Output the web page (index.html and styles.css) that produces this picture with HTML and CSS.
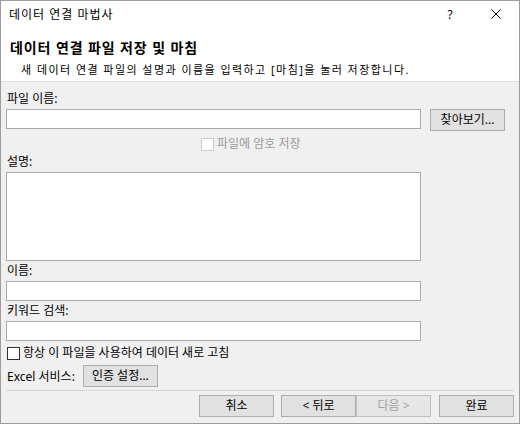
FILE: index.html
```html
<!DOCTYPE html>
<html lang="ko">

<head>
    <meta charset="UTF-8">
    <meta name="viewport" content="width=device-width, initial-scale=1">
    <title>데이터 연결 마법사</title>
    <link rel="stylesheet" href="styles.css">
</head>

<body>
    <div class="window">
        <div class="titlebar">
            <span class="title">데이터 연결 마법사</span>
            <div class="title-buttons">
                <span class="tb-btn help">?</span>
                <span class="tb-btn close">
                    <svg width="10" height="10" viewBox="0 0 10 10">
                        <path d="M0.5 0.5L9.5 9.5M9.5 0.5L0.5 9.5" stroke="#000" stroke-width="1" fill="none" />
                    </svg>
                </span>
            </div>
        </div>

        <div class="header">
            <h1 class="heading">데이터 연결 파일 저장 및 마침</h1>
            <p class="subtitle">새 데이터 연결 파일의 설명과 이름을 입력하고 [마침]을 눌러 저장합니다.</p>
        </div>

        <div class="content">
            <label class="label">파일 이름:</label>
            <div class="file-row">
                <div class="input"></div>
                <button class="btn">찾아보기...</button>
            </div>

            <div class="check-row pw-row disabled">
                <span class="checkbox"></span>
                <span>파일에 암호 저장</span>
            </div>

            <label class="label">설명:</label>
            <div class="input textarea"></div>

            <label class="label">이름:</label>
            <div class="input"></div>

            <label class="label">키워드 검색:</label>
            <div class="input"></div>

            <div class="check-row always-row">
                <span class="checkbox"></span>
                <span>항상 이 파일을 사용하여 데이터 새로 고침</span>
            </div>

            <div class="excel-row">
                <span class="excel-label">Excel 서비스:</span>
                <button class="btn">인증 설정...</button>
            </div>
        </div>

        <div class="footer">
            <button class="btn cancel">취소</button>
            <button class="btn">&lt; 뒤로</button>
            <button class="btn" disabled>다음 &gt;</button>
            <button class="btn finish">완료</button>
        </div>
    </div>
</body>

</html>
```

FILE: styles.css
```css
/* Window frame */
html,
body {
    margin: 0;
    padding: 0;
}

body {
    font-family: "Noto Sans", "Noto Sans CJK KR", sans-serif;
    font-size: 12px;
    color: #000;
}

.window {
    width: 520px;
    height: 424px;
    box-sizing: border-box;
    border: 1px solid #9c9c9c;
    background: #f0f0f0;
    display: flex;
    flex-direction: column;
}

/* Title bar */
.titlebar {
    height: 28px;
    background: #fff;
    display: flex;
    align-items: center;
    justify-content: space-between;
}

.title {
    padding-left: 8px;
    font-size: 12px;
    letter-spacing: 1px;
    line-height: 16px;
}

.title-buttons {
    display: flex;
    height: 28px;
}

.tb-btn {
    width: 46px;
    display: flex;
    align-items: center;
    justify-content: center;
}

.help {
    font-size: 12px;
    padding-bottom: 2px;
}

.close svg {
    display: block;
    margin-bottom: 2px;
}

/* Header */
.header {
    background: #fff;
    padding: 10px 0 3px 0;
    border-bottom: 1px solid #dfdfdf;
}

.heading {
    margin: 0;
    padding-left: 9px;
    font-size: 14px;
    font-weight: bold;
    letter-spacing: 0.9px;
    line-height: 18px;
}

.subtitle {
    margin: 5px 0 0 0;
    padding-left: 20px;
    font-size: 11px;
    letter-spacing: 1.45px;
    line-height: 16px;
}

/* Form area */
.content {
    padding: 9px 0 0 5px;
    display: flex;
    flex-direction: column;
    align-items: flex-start;
}

.label {
    display: block;
    line-height: 16px;
    margin-top: 2px;
    margin-bottom: 2px;
    padding-left: 1px;
}

.content > .label:first-child {
    margin-top: 0;
}

.input {
    width: 415px;
    height: 20px;
    box-sizing: border-box;
    background: #fff;
    border: 1px solid #ababab;
}

.textarea {
    height: 89px;
}

.file-row {
    display: flex;
    align-items: flex-start;
    gap: 9px;
}

.btn {
    width: 75px;
    height: 22px;
    box-sizing: border-box;
    padding: 0;
    background: #e1e1e1;
    border: 1px solid #adadad;
    font-family: "Noto Sans", "Noto Sans CJK KR", sans-serif;
    font-size: 12px;
    line-height: 18px;
    color: #000;
}

.btn:disabled {
    color: #a0a0a0;
    border-color: #bfbfbf;
    background: #e6e6e6;
}

.check-row {
    display: flex;
    align-items: center;
    gap: 3px;
    line-height: 16px;
}

.checkbox {
    width: 13px;
    height: 13px;
    box-sizing: border-box;
    background: #fff;
    border: 1px solid #333;
}

.pw-row {
    margin: 5px 0 0 195px;
}

.disabled {
    color: #9a9a9a;
}

.disabled .checkbox {
    border-color: #cccccc;
}

.always-row {
    margin-top: 4px;
    margin-left: 1px;
}

.excel-row {
    margin-top: 4px;
    display: flex;
    align-items: center;
    gap: 8px;
}

.excel-label {
    padding-left: 1px;
}

/* Footer */
.footer {
    margin: 3px 5px 0 5px;
    padding-top: 4px;
    border-top: 1px solid #d7d7d7;
    display: flex;
    justify-content: flex-end;
}

.cancel {
    margin-right: 7px;
}

.finish {
    margin-left: 8px;
}
```
